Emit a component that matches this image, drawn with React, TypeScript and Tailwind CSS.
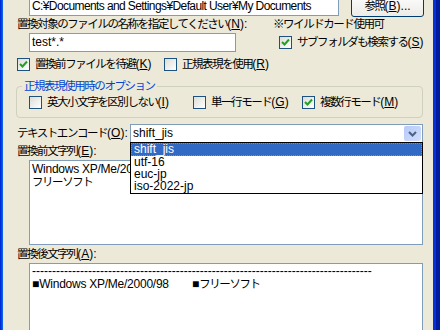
import React from "react";

const J = "font-['Liberation_Sans','Noto_Sans_CJK_JP',sans-serif]";

function C({ children, className = "" }: { children: React.ReactNode; className?: string }) {
  return <span className={`text-[11.5px] tracking-[-1.45px] ${className}`}>{children}</span>;
}

function Check({ checked }: { checked?: boolean }) {
  return (
    <span className="w-[13px] h-[13px] border border-[#1C5180] bg-gradient-to-br from-[#DCDCD7] to-[#FFFFFF] flex items-center justify-center shrink-0">
      {checked && (
        <svg width="9" height="9" viewBox="0 0 9 9">
          <path d="M1 4 L3.5 6.5 L8 1.5" stroke="#21A121" strokeWidth="2" fill="none" />
        </svg>
      )}
    </span>
  );
}

function Label({ text, k, tail = ")" }: { text: string; k: string; tail?: string }) {
  return (
    <span className="whitespace-nowrap">
      <C>{text}</C>(<u>{k}</u>{tail}
    </span>
  );
}

export default function App() {
  return (
    <div className={`w-[440px] h-[330px] overflow-hidden flex bg-[#ECE9D8] text-[12px] leading-[13px] text-black ${J}`}>
      <div className="w-[3px] shrink-0 bg-gradient-to-r from-[#0019CF] to-[#166AEE]" />
      <div className="flex-1 min-w-0 relative flex flex-col pl-[14px] pr-[10px]">
        {/* row: path + button */}
        <div className="shrink-0 flex items-end mt-[-4px] h-[20px] pl-[12px]">
          <div className="w-[310px] shrink-0 h-[20px] bg-white border border-[#7F9DB9] flex items-center pl-[2px] tracking-[-0.6px] whitespace-nowrap">
            C:¥Documents and Settings¥Default User¥My Documents
          </div>
          <div className="w-[12px] shrink-0" />
          <div className="w-[73px] shrink-0 h-[24px] rounded-[3px] border border-[#003C74] bg-gradient-to-b from-[#FFFFFF] to-[#ECEBE6] flex items-end justify-center pb-[3px] mb-[-1px]">
            <span className="whitespace-nowrap"><C>参照</C>(<u>B</u>)...</span>
          </div>
        </div>
        {/* label row */}
        <div className="shrink-0 flex h-[17px] items-center">
          <span className="w-[256px] shrink-0"><Label text="置換対象のファイルの名称を指定してください" k="N" tail="):" /></span>
          <C className="whitespace-nowrap">※ワイルドカード使用可</C>
        </div>
        {/* input row */}
        <div className="shrink-0 flex h-[19px] items-center pl-[12px]">
          <div className="w-[207px] shrink-0 h-[19px] bg-white border border-[#7F9DB9] flex items-center pl-[2px]">test*.*</div>
          <div className="w-[43px] shrink-0" />
          <div className="flex items-center gap-[5px]">
            <Check checked />
            <Label text="サブフォルダも検索する" k="S" />
          </div>
        </div>
        {/* checkbox row */}
        <div className="shrink-0 flex h-[23px] items-center mt-[1px]">
          <div className="flex items-center gap-[5px] w-[147px] shrink-0">
            <Check checked />
            <Label text="置換前ファイルを待避" k="K" />
          </div>
          <div className="flex items-center gap-[5px]">
            <Check />
            <Label text="正規表現を使用" k="R" />
          </div>
        </div>
        {/* group */}
        <div className="shrink-0 relative mt-[10px] h-[32px] border border-[#D0D0BF] rounded-[4px] ml-[-1px] flex items-center pl-[12px]">
          <span className="absolute left-[5px] top-[-8px] bg-[#ECE9D8] px-[2px] text-[#0046D5] whitespace-nowrap leading-[14px]"><C>正規表現使用時のオプション</C></span>
          <div className="flex items-center gap-[5px] w-[164px] shrink-0 mt-[1px]">
            <Check />
            <Label text="英大小文字を区別しない" k="I" />
          </div>
          <div className="flex items-center gap-[5px] w-[109px] shrink-0 mt-[1px]">
            <Check />
            <Label text="単一行モード" k="G" />
          </div>
          <div className="flex items-center gap-[5px] mt-[1px]">
            <Check checked />
            <Label text="複数行モード" k="M" />
          </div>
        </div>
        {/* encoding row */}
        <div className="shrink-0 relative flex h-[19px] items-center mt-[6px]">
          <span className="w-[113px] shrink-0"><Label text="テキストエンコード" k="O" tail="):" /></span>
          <div className="flex-1 h-[19px] bg-white border border-[#7F9DB9] flex items-center pl-[2px] relative">
            shift_jis
            <div className="absolute right-[1px] top-[1px] w-[17px] h-[15px] rounded-[2px] bg-gradient-to-br from-[#B6CAF9] to-[#D2DFFB] flex items-center justify-center">
              <svg width="9" height="6" viewBox="0 0 9 6">
                <path d="M1 1 L4.5 4.5 L8 1" stroke="#4D6185" strokeWidth="2" fill="none" />
              </svg>
            </div>
          </div>
          {/* dropdown list */}
          <div className="absolute left-[113px] right-0 top-[18px] z-10 bg-white border border-black flex flex-col pb-[1px]">
            <div className="h-[13px] bg-[#316AC5] text-white pl-[2px] flex items-center border border-dotted border-[#C08040]">shift_jis</div>
            <div className="h-[12px] pl-[3px] flex items-center">utf-16</div>
            <div className="h-[12px] pl-[3px] flex items-center">euc-jp</div>
            <div className="h-[12px] pl-[3px] flex items-center">iso-2022-jp</div>
          </div>
        </div>
        {/* before label */}
        <div className="shrink-0 h-[17px] flex items-center">
          <Label text="置換前文字列" k="E" tail="):" />
        </div>
        <div className="shrink-0 ml-[12px] h-[85px] bg-white border border-[#7F9DB9] pl-[2px] pt-[2px] leading-[13px]">
          <div className="tracking-[-0.25px]">Windows XP/Me/2000/98</div>
          <div><C>フリーソフト</C></div>
        </div>
        <div className="shrink-0 h-[18px] flex items-center">
          <Label text="置換後文字列" k="A" tail="):" />
        </div>
        <div className="shrink-0 ml-[12px] h-[80px] bg-white border border-[#7F9DB9] pl-[2px] pt-[1px] leading-[13px]">
          <div className="whitespace-pre">{"-------------------------------------------------------------------------------------"}</div>
          <div className="whitespace-pre flex items-center">
            <span className="w-[160px] shrink-0">■<span className="tracking-[-0.25px]">Windows XP/Me/2000/98</span></span>
            <span>■<C>フリーソフト</C></span>
          </div>
        </div>
      </div>
      <div className="w-[7px] shrink-0 flex">
        <div className="w-[3px] bg-[#0831D9]" />
        <div className="flex-1 bg-[#001DA0]" />
      </div>
    </div>
  );
}
